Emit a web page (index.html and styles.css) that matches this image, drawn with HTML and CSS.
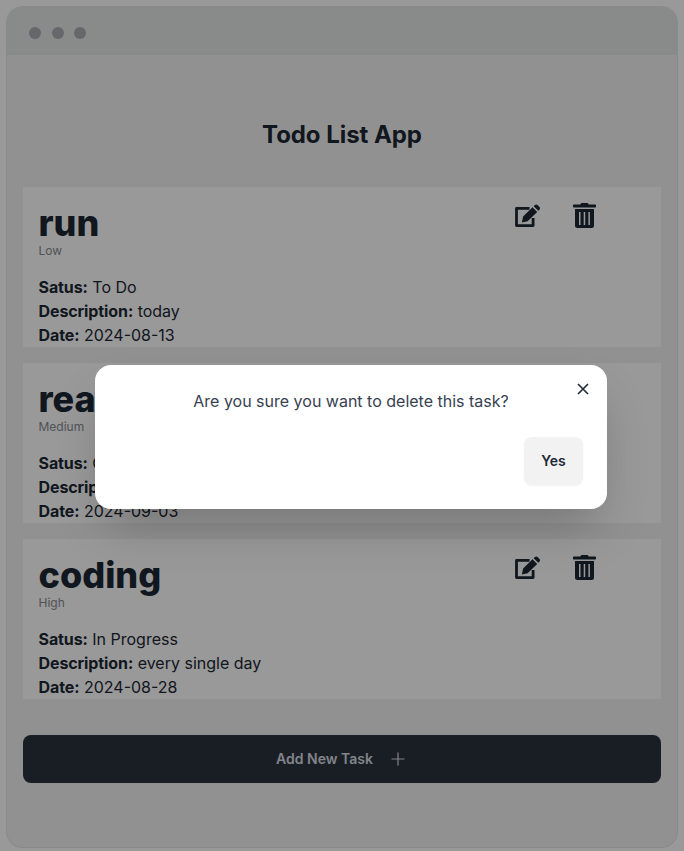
FILE: index.html
```html
<!DOCTYPE html>
<html lang="en">
<head>
<meta charset="utf-8">
<title>Todo List App</title>
<link rel="stylesheet" href="styles.css">
</head>
<body>
<svg class="sprite" aria-hidden="true">
  <symbol id="edit" viewBox="0 0 26 24">
    <path d="M14.500 4.400H1.500v17.200h16.600V14" fill="none" stroke="currentColor" stroke-width="2.800" stroke-linejoin="round"/>
    <path d="M17.500 3.200l4.700 4.700L12.600 17.200 6.900 18.400 8.100 12.600zM18.700 2.200l1.200-1.200c.8-.8 1.800-.8 2.600 0l2 2c.8.8.8 1.800 0 2.600l-1.200 1.200z" fill="currentColor"/>
  </symbol>
  <symbol id="trash" viewBox="0 0 23 25">
    <path d="M.8 1.400h6.400L8.400.1h6.200l1.200 1.300h6.400q.8 0 .8.8v1.500q0 .8-.8.8H.8Q0 4.500 0 3.700V2.200q0-.8.800-.8z" fill="currentColor"/>
    <path fill-rule="evenodd" d="M2 6h19v16.500q0 2.500-2.500 2.500h-14Q2 25 2 22.500zM6 9v13h1.500V9zM10.700 9v13h1.500V9zM15.400 9v13h1.500V9z" fill="currentColor"/>
  </symbol>
</svg>
<main class="window">
  <header class="toolbar"><i></i><i></i><i></i></header>
  <div class="content">
    <h1>Todo List App</h1>
    <section class="tasks">
      <article class="card">
        <div><h2>run</h2><p class="priority">Low</p>
        <p><b>Satus:</b> To Do</p><p><b>Description:</b> today</p><p><b>Date:</b> 2024-08-13</p></div>
        <div class="actions"><svg class="edit"><use href="#edit"/></svg><svg class="trash"><use href="#trash"/></svg></div>
      </article>
      <article class="card">
        <div><h2>read</h2><p class="priority">Medium</p>
        <p><b>Satus:</b> Completed</p><p><b>Description:</b> book</p><p><b>Date:</b> 2024-09-03</p></div>
      </article>
      <article class="card">
        <div><h2>coding</h2><p class="priority">High</p>
        <p><b>Satus:</b> In Progress</p><p><b>Description:</b> every single day</p><p><b>Date:</b> 2024-08-28</p></div>
        <div class="actions"><svg class="edit"><use href="#edit"/></svg><svg class="trash"><use href="#trash"/></svg></div>
      </article>
    </section>
    <button class="add">Add New Task <svg viewBox="0 0 14 14"><path d="M7 .5v13M.5 7h13"/></svg></button>
  </div>
</main>
<div class="overlay">
  <div class="modal" role="dialog">
    <button class="close" aria-label="Close"><svg viewBox="0 0 12 12"><path d="M1 1l10 10M11 1L1 11"/></svg></button>
    <p>Are you sure you want to delete this task?</p>
    <button class="yes">Yes</button>
  </div>
</div>
</body>
</html>
```
FILE: styles.css
```css
* { box-sizing: border-box; }
body { margin: 0; padding: 6px; height: 851px; overflow: hidden; background: #fff; color: #1f2937; font: 16px/24px Inter, sans-serif; }
h1, h2, p { margin: 0; }
button { font: 600 14px/14px Inter, sans-serif; border: 0; }
.sprite { position: absolute; width: 0; height: 0; }
.window { height: 842px; width: 672px; border: 1px solid #e5e6e6; border-radius: 16px; background: #f2f2f2; overflow: hidden; }
.toolbar { height: 48px; background: #e5e8e6; display: flex; align-items: center; gap: 10.4px; padding: 4px 22.4px 0; }
.toolbar i { width: 12px; height: 12px; border-radius: 50%; background: #a9adb3; }
.content { padding: 64px 16px 0; }
h1 { font-size: 24px; line-height: 32px; font-weight: 700; letter-spacing: -.05px; text-align: center; color: #1c2733; }
.tasks { display: flex; flex-direction: column; gap: 16px; margin-top: 36px; }
.card { height: 160px; background: #fff; padding: 16px 16px 16px 15.5px; display: flex; justify-content: space-between; color: #1c2733; }
.card h2 { font-size: 36px; line-height: 40px; font-weight: 800; }
.card b { font-weight: 700; letter-spacing: -.1px; }
.card .priority { font-size: 12px; line-height: 16px; margin-bottom: 16px; color: #858a93; }
.actions { display: flex; gap: 32px; padding-right: 49px; }
.edit { width: 26px; height: 24px; margin-top: 1px; }
.trash { width: 23px; height: 25px; }
.add { margin-top: 36px; width: 100%; height: 48px; border-radius: 8px; background: #2b323c; color: #d7dde4; display: flex; align-items: center; justify-content: center; gap: 18px; padding: 0 9px 0 6px; }
.add svg { width: 14px; height: 14px; fill: none; stroke: currentColor; stroke-width: 1.2; }
.overlay { position: absolute; inset: 0; background: rgba(0,0,0,.4); }
.modal { position: absolute; left: 95px; top: 365px; width: 512px; height: 144px; padding: 24px; border-radius: 16px; background: #fff; box-shadow: 0 25px 50px -12px rgba(0,0,0,.25); text-align: center; color: #374151; display: flex; flex-direction: column; justify-content: space-between; }
.close { position: absolute; top: 18px; right: 18px; width: 12px; height: 12px; padding: 0; background: none; }
.close svg { display: block; fill: none; stroke: #1f2937; stroke-width: 1.6; }
.yes { align-self: flex-end; width: 59px; height: 48px; border-radius: 8px; background: #f2f2f2; color: #1f2937; box-shadow: 0 1px 2px rgba(0,0,0,.05); }
```
